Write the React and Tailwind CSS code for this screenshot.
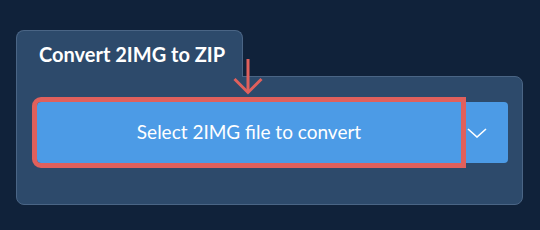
import React from "react";

export default function App() {
  return (
    <div className="relative w-[540px] h-[230px] bg-[#10223a] pt-[30px] pl-4 font-['Lato',sans-serif]">
      {/* Tab */}
      <div className="relative z-10 -mb-px w-[227px] h-[47px] bg-[#2d4a6b] border border-b-0 border-[#4a6585] rounded-t-lg pl-[22px] pt-[11px]">
        <h1 className="text-white font-bold text-[20px] leading-6">Convert 2IMG to ZIP</h1>
      </div>

      {/* Panel */}
      <div className="w-[507px] h-[129px] bg-[#2d4a6b] border border-[#4a6585] rounded-b-lg rounded-tr-lg pl-5 pt-[25px]">
        <div className="flex w-[471px]">
          <button className="relative z-10 h-[61px] w-[424px] bg-[#4c9be6] rounded-l outline-[5px] outline-solid outline-[#e0605c] text-white text-[19px]">
            Select 2IMG file to convert
          </button>
          <button className="h-[61px] flex-1 bg-[#4c9be6] rounded-r flex items-center pl-[6px]">
            <svg width="20" height="10" viewBox="0 0 20 10" fill="none">
              <path d="M1 1 L10 9 L19 1" stroke="white" strokeWidth="1.6" />
            </svg>
          </button>
        </div>
      </div>

      {/* Pointer arrow */}
      <svg className="absolute left-[233px] top-[59px] z-20" width="31" height="37" viewBox="0 0 31 37" fill="none">
        <path d="M15 0 V33" stroke="#e0605c" strokeWidth="3" />
        <path d="M1.5 20 L15 33.5 L28.5 20" stroke="#e0605c" strokeWidth="3" />
      </svg>
    </div>
  );
}
